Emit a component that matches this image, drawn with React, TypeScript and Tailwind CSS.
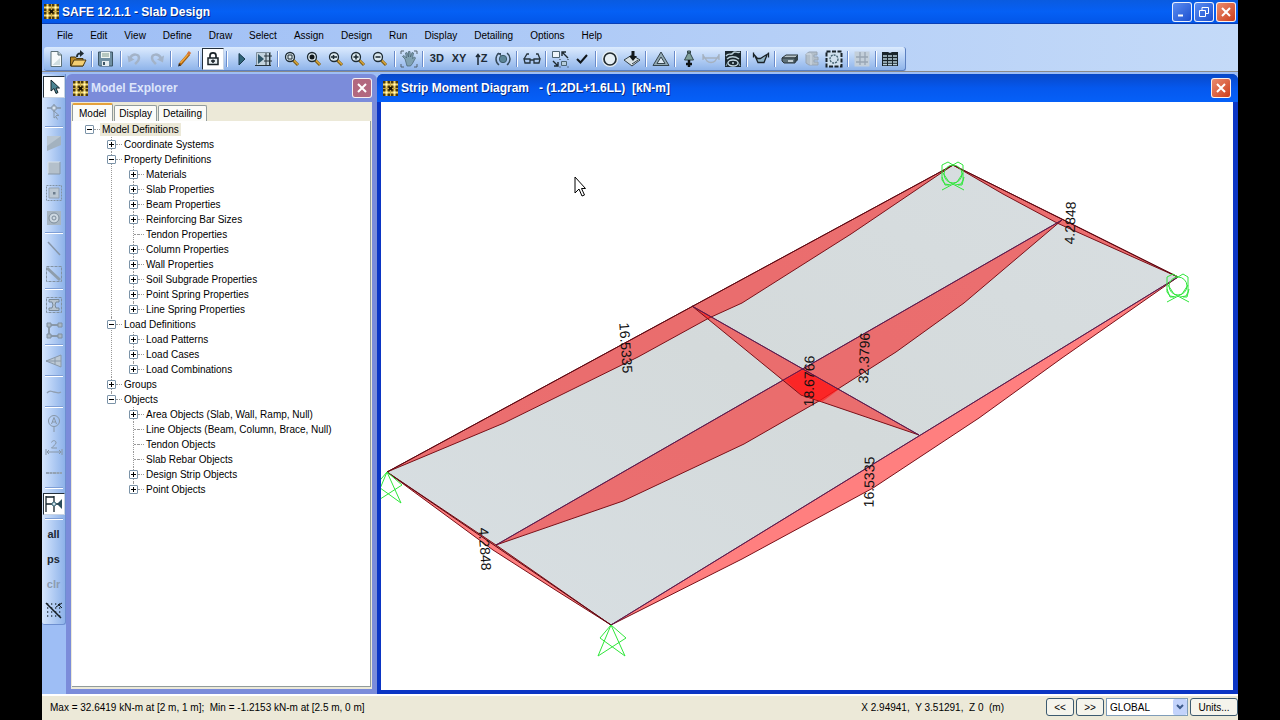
import { Fragment, useState } from "react";
import type { ReactNode } from "react";

const MENUS = [
  "File",
  "Edit",
  "View",
  "Define",
  "Draw",
  "Select",
  "Assign",
  "Design",
  "Run",
  "Display",
  "Detailing",
  "Options",
  "Help",
];

type TreeNode = {
  label: string;
  open?: boolean;
  closed?: boolean;
  children?: TreeNode[];
};

const TREE: TreeNode = {
  label: "Model Definitions",
  open: true,
  children: [
    { label: "Coordinate Systems", closed: true },
    {
      label: "Property Definitions",
      open: true,
      children: [
        { label: "Materials", closed: true },
        { label: "Slab Properties", closed: true },
        { label: "Beam Properties", closed: true },
        { label: "Reinforcing Bar Sizes", closed: true },
        { label: "Tendon Properties" },
        { label: "Column Properties", closed: true },
        { label: "Wall Properties", closed: true },
        { label: "Soil Subgrade Properties", closed: true },
        { label: "Point Spring Properties", closed: true },
        { label: "Line Spring Properties", closed: true },
      ],
    },
    {
      label: "Load Definitions",
      open: true,
      children: [
        { label: "Load Patterns", closed: true },
        { label: "Load Cases", closed: true },
        { label: "Load Combinations", closed: true },
      ],
    },
    { label: "Groups", closed: true },
    {
      label: "Objects",
      open: true,
      children: [
        { label: "Area Objects (Slab, Wall, Ramp, Null)", closed: true },
        { label: "Line Objects (Beam, Column, Brace, Null)" },
        { label: "Tendon Objects" },
        { label: "Slab Rebar Objects" },
        { label: "Design Strip Objects", closed: true },
        { label: "Point Objects", closed: true },
      ],
    },
  ],
};

function Icon({ children }: { children: ReactNode }) {
  return (
    <svg viewBox="0 0 18 18" className="w-[18px] h-[18px] shrink-0" fill="none">
      {children}
    </svg>
  );
}

function Lens({ children, dark }: { children?: ReactNode; dark?: boolean }) {
  return (
    <Icon>
      <path d="M10 10l5 5" stroke="#7a5a14" strokeWidth="3" />
      <path d="M10.500 10l4.500 4.500" stroke="#d9a53a" strokeWidth="1.500" />
      <circle cx="7" cy="7" r="4.500" fill="#dbe8ee" stroke="#1c2a33" strokeWidth="1.300" />
      {dark && <circle cx="7" cy="7" r="2.500" fill="#10181c" />}
      {children}
    </Icon>
  );
}

type Tool = { name: string; icon: ReactNode; active?: boolean };

const TOOL_GROUPS: Tool[][] = [
  [
    {
      name: "New",
      icon: (
        <Icon>
          <path d="M4 1.500h7l3.500 3.500v11.500H4z" fill="#f6fafb" stroke="#5b7079" />
          <path d="M11 1.500V5h3.500" fill="#b9c9cf" stroke="#5b7079" />
          <path d="M5.500 15l7.500-7v7z" fill="#cfdde0" />
        </Icon>
      ),
    },
    {
      name: "Open",
      icon: (
        <Icon>
          <path d="M1.500 16V7h5l1 1.500H14V16z" fill="#b98a2a" stroke="#4a380f" />
          <path d="M2 16l3-6h12l-3 6z" fill="#f5cf72" stroke="#4a380f" />
          <path d="M8 7c0-3 1-3.500 3.500-3.500" stroke="#1f2c33" strokeWidth="2" />
          <path d="M11 0l4 3.500L11 7z" fill="#1f2c33" />
        </Icon>
      ),
    },
  ],
  [
    {
      name: "Save",
      icon: (
        <Icon>
          <path d="M1.500 2h14v14h-13l-1-1z" fill="#6f8fa2" stroke="#3d5565" />
          <path d="M4 2h9v6H4z" fill="#eef5f2" />
          <path d="M5 4h7M5 6h7" stroke="#7f9a8d" />
          <path d="M5 11h7v5H5z" fill="#e4ecef" />
          <path d="M6 12h2v3H6z" fill="#3d5565" />
        </Icon>
      ),
    },
  ],
  [
    {
      name: "Undo",
      icon: (
        <Icon>
          <path d="M4 8c3-5 9-4 9 0 0 3-2 4-4 6" stroke="#a3b3c8" strokeWidth="2.500" />
          <path d="M1.500 5.500l1 7 6-3z" fill="#a3b3c8" />
        </Icon>
      ),
    },
    {
      name: "Redo",
      icon: (
        <Icon>
          <path d="M13 8C10 3 4 4 4 8c0 3 2 4 4 6" stroke="#a3b3c8" strokeWidth="2.500" />
          <path d="M16 5.500l-1 7-6-3z" fill="#a3b3c8" />
        </Icon>
      ),
    },
  ],
  [
    {
      name: "Edit pencil",
      icon: (
        <Icon>
          <path d="M3.500 15L13 4" stroke="#a35f0e" strokeWidth="3" />
          <path d="M4.500 13L13 3.500" stroke="#f3a63a" strokeWidth="1.500" />
          <path d="M12 4.500l2-2.500" stroke="#d6793a" strokeWidth="3" />
          <path d="M2 16.500l1-3 2 2z" fill="#222" />
        </Icon>
      ),
    },
  ],
  [
    {
      name: "Lock model",
      active: true,
      icon: (
        <Icon>
          <path d="M6 8V5.500C6 2 12 2 12 5.500V8" stroke="#1b2328" strokeWidth="1.700" />
          <path d="M4 8h10v6.500H4z" fill="#e6ecef" stroke="#1b2328" strokeWidth="1.500" />
          <path d="M9 9.500v3.500M7 11h4" stroke="#1b2328" strokeWidth="1.500" />
        </Icon>
      ),
    },
  ],
  [
    {
      name: "Run analysis",
      icon: (
        <Icon>
          <path d="M6 3.500l6 5.500-6 6z" fill="#2f6478" stroke="#17394a" />
        </Icon>
      ),
    },
    {
      name: "Run design",
      icon: (
        <Icon>
          <path d="M1.500 2.500h14v13h-14z" fill="#c3d3de" stroke="#7d8f9c" />
          <path d="M9 6h8M9 11h8M11 3v12M14.500 3v12" stroke="#2a373f" />
          <path d="M3 4l6 5-6 5z" fill="#2f5668" />
          <path d="M0 15.500h16" stroke="#26333b" />
        </Icon>
      ),
    },
  ],
  [
    {
      name: "Rubber band zoom",
      icon: (
        <Lens>
          <path d="M5 5h4v4H5z" stroke="#1c2a33" />
        </Lens>
      ),
    },
    { name: "Full view", icon: <Lens dark /> },
    {
      name: "Previous zoom",
      icon: (
        <Lens>
          <path d="M4 7h6M6.500 5v4" stroke="#1c2a33" strokeWidth="1.500" />
        </Lens>
      ),
    },
    {
      name: "Zoom in",
      icon: (
        <Lens>
          <path d="M4.500 7h5M7 4.500v5" stroke="#1c2a33" strokeWidth="1.500" />
        </Lens>
      ),
    },
    {
      name: "Zoom out",
      icon: (
        <Lens>
          <path d="M4.500 7h5" stroke="#1c2a33" strokeWidth="1.500" />
        </Lens>
      ),
    },
  ],
  [
    {
      name: "Pan",
      icon: (
        <Icon>
          <path
            d="M5 9L2.500 6.500 4 5.500 6.500 8 5.500 3 7 2.500 8.500 7V1.500H10L10.500 7l1.500-4.500 1.500.5-1 5.500 2-1.500 1 1-3 5.500-2 2.500H7z"
            fill="#7fa0b0"
            stroke="#47616f"
            strokeWidth=".7"
          />
          <path d="M1 4V1h3M14 1h3v3M1 14v3h3M17 14v3h-3" stroke="#55636e" />
        </Icon>
      ),
    },
  ],
  [
    { name: "3D view", icon: <span className="text-[11px] font-bold">3D</span> },
    { name: "XY view", icon: <span className="text-[11px] font-bold">XY</span> },
    {
      name: "Elevation view",
      icon: (
        <span className="flex items-center text-[11px] font-bold">
          <svg viewBox="0 0 6 12" className="w-[6px] h-[12px]" fill="none">
            <path d="M3 12V2M1 4l2-2.500L5 4" stroke="#1d2a35" strokeWidth="1.500" />
          </svg>
          Z
        </span>
      ),
    },
    {
      name: "Rotate view",
      icon: (
        <Icon>
          <circle cx="9" cy="9" r="3.700" fill="#5c8698" stroke="#3a5a69" />
          <path d="M5 3C1 6 1 12 5 15M13 3c4 3 4 9 0 12" stroke="#35495a" strokeWidth="1.500" />
          <path d="M3 3h4v3z" fill="#35495a" />
        </Icon>
      ),
    },
  ],
  [
    {
      name: "Perspective",
      icon: (
        <Icon>
          <path d="M1 9h6v4H2zM11 9h6l-1 4h-5zM7 10h4M1 9l3-5h2M17 9l-2-5h-2" stroke="#26343c" strokeWidth="1.300" />
        </Icon>
      ),
    },
  ],
  [
    {
      name: "Object shrink",
      icon: (
        <Icon>
          <path d="M1.500 1.500h7v6h-7z" fill="#eef5fa" stroke="#4d6472" />
          <path d="M17 8l-6-6M11 6V2h4M2 11l5 5M3 16h4v-4" stroke="#1e2a31" strokeWidth="1.400" />
          <path d="M10.500 11.500h5v4h-5z" fill="#b5cddd" stroke="#4d6472" />
          <path d="M8.500 9.500h1M16.500 9.500h1M8.500 17h1M16.500 17h1" stroke="#1e2a31" />
        </Icon>
      ),
    },
    {
      name: "Set display options",
      icon: (
        <Icon>
          <path d="M4 9l3.500 3.500L14 5" stroke="#10161a" strokeWidth="2" />
        </Icon>
      ),
    },
  ],
  [
    {
      name: "Show undeformed shape",
      icon: (
        <Icon>
          <circle cx="9" cy="9" r="8" fill="#e6eff4" />
          <circle cx="9" cy="9" r="6" stroke="#222c32" strokeWidth="1.700" />
        </Icon>
      ),
    },
    {
      name: "Show loads",
      icon: (
        <Icon>
          <path d="M1 10l8-5 8 5-8 6z" fill="#d8e2e6" stroke="#323f46" />
          <path d="M9 14l6-4" stroke="#323f46" />
          <path d="M8.500 1h3v5H14l-4 5-4-5h2.500z" fill="#12191d" />
        </Icon>
      ),
    },
  ],
  [
    {
      name: "Show deformed shape",
      icon: (
        <Icon>
          <path d="M9 2l8 13.500H1z" fill="#91a8b3" stroke="#35444c" />
          <path d="M9 7l4 6.500H5z" fill="#dbe8f3" stroke="#35444c" />
        </Icon>
      ),
    },
  ],
  [
    {
      name: "Show reactions",
      icon: (
        <Icon>
          <path d="M7.500 1h3v2h-3zM8 3h2l3.500 7h-9z" fill="#7fa09a" stroke="#33474a" />
          <path d="M9 10v7M6 14h6" stroke="#0d1214" strokeWidth="2.500" />
        </Icon>
      ),
    },
    {
      name: "Show beam forces",
      icon: (
        <Icon>
          <path d="M1 4v6M17 4v6M1 5l4 6c2 2 6 2 8 0l4-6M1 8h16" stroke="#a5b1bf" strokeWidth="1.300" />
        </Icon>
      ),
    },
    {
      name: "Show slab forces",
      icon: (
        <Icon>
          <path d="M1 1h16v16H1z" fill="#1b272e" />
          <path d="M2 6c3-4 5 0 7-3s4 1 7-1M3 9c3-3 8-3 12 0" stroke="#b9ced8" strokeWidth="1.400" />
          <ellipse cx="9" cy="13" rx="5" ry="3" stroke="#c8dbe4" strokeWidth="1.300" />
          <path d="M2 16l2-4M16 16l-2-4" stroke="#8faab7" />
          <circle cx="9" cy="13" r="1" fill="#c8dbe4" />
        </Icon>
      ),
    },
  ],
  [
    {
      name: "Show strip forces",
      icon: (
        <Icon>
          <path d="M4 8l5 1.500L15 5l-3 7.500H6z" fill="#8fb3c4" />
          <path d="M1.500 2.500v5M16.500 2.500v5M1.500 4l4 4.500h3l8-5M3 6l3 6.500h6l3-7.500" stroke="#1a2328" strokeWidth="1.300" />
        </Icon>
      ),
    },
  ],
  [
    {
      name: "Show slab design",
      icon: (
        <Icon>
          <path d="M1 8l4-3h12l-3 3z" fill="#b7c4c9" stroke="#29343a" />
          <path d="M1 8h13v5H3l-2-2z" fill="#5e7078" stroke="#29343a" />
          <path d="M14 8l3-3v5l-3 3z" fill="#33424a" />
          <path d="M7 11h5" stroke="#e6eef2" strokeWidth="1.500" />
        </Icon>
      ),
    },
    {
      name: "Show beam design",
      icon: (
        <Icon>
          <path d="M3 4l3-2h8v3h-3v2h4v3h-4v2h4v3H6l-3-2z" fill="#b3bfca" stroke="#98a5b3" />
          <path d="M3 4h5v11" stroke="#d4dee8" />
        </Icon>
      ),
    },
    {
      name: "Show punching shear",
      icon: (
        <Icon>
          <path d="M1.500 1.500h15v15h-15z" fill="#cfe0ee" stroke="#18232a" strokeWidth="2" strokeDasharray="4 1.500" />
          <circle cx="9" cy="9" r="4" stroke="#42606f" strokeWidth="1.300" strokeDasharray="2 1" />
        </Icon>
      ),
    },
  ],
  [
    {
      name: "Show detailing",
      icon: (
        <Icon>
          <path d="M1.500 1.500h15v15h-15z" fill="#c3cfda" />
          <path d="M3 7h12M3 12h12M7 2v13M12 2v13" stroke="#99a6b4" strokeWidth="1.300" />
        </Icon>
      ),
    },
  ],
  [
    {
      name: "Show tables",
      icon: (
        <Icon>
          <path d="M1 2h6l2 1 2-1h6v14H1z" fill="#18242b" />
          <path d="M2 6h4M7 6h4M12 6h4M2 9h4M7 9h4M12 9h4M2 12h4M7 12h4M12 12h4M2 14.500h4M7 14.500h4M12 14.500h4" stroke="#b8cfdb" strokeWidth="1.500" />
        </Icon>
      ),
    },
  ],
];

const SIDE_GROUPS: Tool[][] = [
  [
    {
      name: "Select",
      active: true,
      icon: (
        <Icon>
          <path d="M6 2v11l3-2.500 2 5 2-1-2-4.500h3.500z" fill="#4a8492" stroke="#16262c" />
        </Icon>
      ),
    },
    {
      name: "Reshape",
      icon: (
        <Icon>
          <path d="M2 5h14M9 1v8" stroke="#8797a8" strokeWidth="1.300" />
          <path d="M7 3h4v4H7z" fill="#d7e4f2" stroke="#8797a8" />
          <path d="M9 8v7l2-1.500 1.500 3M9 8l5 4.500h-3" stroke="#8797a8" />
        </Icon>
      ),
    },
  ],
  [
    {
      name: "Draw slab",
      icon: (
        <Icon>
          <path d="M2 2h14v9L2 17z" fill="#a3b2bf" />
          <path d="M2 2h14L2 12z" fill="#bac7d3" />
        </Icon>
      ),
    },
    {
      name: "Draw rectangular slab",
      icon: (
        <Icon>
          <path d="M3 3h12v12H3z" fill="#b4c0cb" />
          <path d="M3 15V3h12" stroke="#d8e1e9" />
          <path d="M15 3v12H3" stroke="#8897a6" />
        </Icon>
      ),
    },
    {
      name: "Quick draw slab",
      icon: (
        <Icon>
          <path d="M1.500 1.500h15v15h-15z" stroke="#8292a2" strokeDasharray="2 1" />
          <path d="M4 4h10v10H4z" fill="#bcc8d3" stroke="#93a1b0" />
          <path d="M8 8h2.500v2.500H8z" fill="#6d7d8d" />
        </Icon>
      ),
    },
    {
      name: "Quick draw around points",
      icon: (
        <Icon>
          <path d="M2 2h14v14H2z" fill="#a7b5c2" />
          <circle cx="9" cy="9" r="5" fill="#cdd8e1" stroke="#7d8d9c" />
          <circle cx="9" cy="9" r="2" stroke="#7d8d9c" />
        </Icon>
      ),
    },
  ],
  [
    {
      name: "Draw beam",
      icon: (
        <Icon>
          <path d="M3 2l12 13" stroke="#8796a8" strokeWidth="1.500" />
        </Icon>
      ),
    },
    {
      name: "Quick draw beam",
      icon: (
        <Icon>
          <path d="M1.500 1.500h15v15h-15z" stroke="#8292a2" strokeDasharray="3 1" />
          <path d="M2 3l13 12" stroke="#8e9dac" strokeWidth="3" />
        </Icon>
      ),
    },
  ],
  [
    {
      name: "Draw column",
      icon: (
        <Icon>
          <path d="M1.500 1.500h15v15h-15z" stroke="#8292a2" strokeDasharray="3 1" />
          <path d="M4 3.500h10V6h-3l-1 3 1 3h3v2.500H4V12h3l1-3-1-3H4z" fill="#b7c4d0" stroke="#798998" />
        </Icon>
      ),
    },
    {
      name: "Draw wall",
      icon: (
        <Icon>
          <path d="M15 4H4v11h11" stroke="#8998a8" strokeWidth="2" />
          <path d="M2 2h4v4H2zM2 13h4v4H2zM13 2h4v4h-4zM13 13h4v4h-4z" fill="#a9b7c5" stroke="#8090a0" />
        </Icon>
      ),
    },
  ],
  [
    {
      name: "Draw ramp",
      icon: (
        <Icon>
          <path d="M1 9l15-6v12z" fill="#bdc9d4" stroke="#8998a8" />
          <path d="M1 9h15M10 5.500v7" stroke="#8998a8" />
        </Icon>
      ),
    },
  ],
  [
    {
      name: "Draw tendon",
      icon: (
        <Icon>
          <path d="M2 10c3-4 5-1 7-1s4 2 7 0" stroke="#8f9eb0" strokeWidth="1.300" />
        </Icon>
      ),
    },
  ],
  [
    {
      name: "Draw strip",
      icon: (
        <Icon>
          <circle cx="9" cy="7" r="5.500" stroke="#8796a6" />
          <path d="M6.500 10L9 3.500l2.500 6.500M7.500 8h3M9 13v5" stroke="#8796a6" />
        </Icon>
      ),
    },
    {
      name: "Draw dimension",
      icon: (
        <Icon>
          <path d="M1 10v6M17 10v6M2 13h14M4 11l-2 2 2 2M14 11l2 2-2 2" stroke="#8796a6" />
          <path d="M6.500 3.500c1-3 5-2 4.500.5-.5 2-3 3-4.500 5H12" stroke="#8796a6" />
        </Icon>
      ),
    },
    {
      name: "Draw rebar",
      icon: (
        <Icon>
          <path d="M1 9h16" stroke="#93a2b3" strokeWidth="2" strokeDasharray="3 .5" />
        </Icon>
      ),
    },
  ],
  [
    {
      name: "Snap to points",
      active: true,
      icon: (
        <Icon>
          <path d="M1 1v16M1 9h13M9 1v16M1 2h8" stroke="#15232b" strokeWidth="1.300" />
          <circle cx="9" cy="9" r="2" fill="#cfe1e8" stroke="#3a6a7c" />
          <path d="M17 4v10l-5-5z" fill="#2b4d5b" />
        </Icon>
      ),
    },
  ],
  [
    { name: "Select all", icon: <span className="text-[11px] font-bold">all</span> },
    { name: "Previous selection", icon: <span className="text-[11px] font-bold">ps</span> },
    {
      name: "Clear selection",
      icon: <span className="text-[11px] font-bold text-[#8c9cb0]">clr</span>,
    },
    {
      name: "Intersecting line select",
      icon: (
        <Icon>
          <path d="M2 3h15M2 7h15M2 11h15M2 15h15" stroke="#2e3d49" strokeWidth="1.300" strokeDasharray="1.300 2.700" />
          <path d="M1 2l15 15" stroke="#141d23" strokeWidth="1.500" />
          <path d="M17 2l-6 4M13 3l4 4" stroke="#141d23" />
        </Icon>
      ),
    },
  ],
];

function AppIcon() {
  return (
    <svg viewBox="0 0 15 15" className="w-[15px] h-[15px] shrink-0">
      <path d="M0 0h15v15H0z" fill="#4a380c" />
      <path d="M0 3.500h15M0 11.500h15M3.500 0v15M11.500 0v15" stroke="#f0d468" strokeWidth="2" />
      <path d="M7.500 0v15M0 7.500h15" stroke="#c9a845" />
      <path d="M2.500 2.500h2v2h-2zM10.500 2.500h2v2h-2zM2.500 10.500h2v2h-2zM10.500 10.500h2v2h-2z" fill="#fff6c8" />
      <path d="M6 6h3v3H6z" fill="#1a1405" />
    </svg>
  );
}

function WindowButton({ name, children, className }: { name: string; children: ReactNode; className: string }) {
  return (
    <button
      aria-label={name}
      className={`flex items-center justify-center w-[20px] h-[20px] rounded-[3px] border border-white/90 ${className}`}
    >
      <svg viewBox="0 0 14 14" className="w-[14px] h-[14px]" fill="none" stroke="white">
        {children}
      </svg>
    </button>
  );
}

function CloseButton({ muted }: { muted?: boolean }) {
  return (
    <WindowButton
      name="Close"
      className={muted ? "bg-[#b2687f]" : "bg-linear-to-br from-[#e98b6e] to-[#cc3a14]"}
    >
      <path d="M3 3l8 8M11 3l-8 8" strokeWidth="2" />
    </WindowButton>
  );
}

function ToolButton({ tool }: { tool: Tool }) {
  return (
    <button
      aria-label={tool.name}
      className={`flex items-center justify-center w-[22px] h-[22px] shrink-0 ${
        tool.active ? "bg-white border border-[#24303c] border-r-[#c8d4e4] border-b-[#c8d4e4]" : ""
      }`}
    >
      {tool.icon}
    </button>
  );
}

function TreeItem({ node, depth = 0, last = true }: { node: TreeNode; depth?: number; last?: boolean }) {
  const hasBox = node.open || node.closed;

  return (
    <li className="relative">
      {depth > 0 && (
        <span
          className={`absolute left-[4px] top-0 border-l border-dotted border-[#9a9a9a] ${last ? "h-[8px]" : "bottom-0"}`}
        />
      )}
      <div className="relative flex items-center h-[15px]">
        {hasBox ? (
          <button
            aria-label={`Toggle ${node.label}`}
            className="w-[9px] h-[9px] shrink-0 border border-[#7b93a8] rounded-[1px] bg-white flex items-center justify-center"
          >
            <svg viewBox="0 0 7 7" className="w-[7px] h-[7px] shrink-0" stroke="#000">
              <path d={node.open ? "M1 3.500h5" : "M1 3.500h5M3.500 1v5"} />
            </svg>
          </button>
        ) : (
          <span className="w-[4px] ml-[5px] border-t border-dotted border-[#9a9a9a]" />
        )}
        <span className="w-[6px] border-t border-dotted border-[#9a9a9a]" />
        <span className={`px-[2px] whitespace-nowrap leading-[13px] ${depth === 0 ? "bg-[#ece9d8]" : ""}`}>
          {node.label}
        </span>
      </div>
      {node.children && (
        <ul className="pl-[22px]">
          {node.children.map((child, i) => (
            <TreeItem
              key={child.label}
              node={child}
              depth={depth + 1}
              last={i === node.children!.length - 1}
            />
          ))}
        </ul>
      )}
    </li>
  );
}

function ModelExplorer() {
  const [tab, setTab] = useState("Model");

  return (
    <section className="flex flex-col w-[311px] shrink-0 rounded-t-[6px] bg-[#7b8cda] px-[5px] pb-[5px]">
      <header className="flex items-center justify-between h-[28px] pl-[2px]">
        <div className="flex items-center gap-[3px]">
          <AppIcon />
          <h2 className="text-[12px] font-bold text-[#dde5fb]">Model Explorer</h2>
        </div>
        <CloseButton muted />
      </header>
      <div className="flex flex-col flex-1 min-h-0 bg-[#ece9d8] pt-[1px] pb-[2px] px-[1px]">
        <div className="flex items-end h-[18px]">
          {["Model", "Display", "Detailing"].map((name) => (
            <button
              key={name}
              onClick={() => setTab(name)}
              className={`border border-b-0 border-[#919b9c] rounded-t-[2px] whitespace-nowrap bg-[#fbfbf8] mr-[1px] ${
                tab === name
                  ? "h-[18px] px-[6px] border-t-2 border-t-[#e5a13a]"
                  : "h-[16px] px-[4px]"
              }`}
            >
              {name}
            </button>
          ))}
        </div>
        <div className="flex-1 min-h-0 overflow-hidden bg-white border-r border-b border-[#919b9c] pl-[13px] pt-[1px]">
          <ul>
            <TreeItem node={TREE} />
          </ul>
        </div>
      </div>
    </section>
  );
}

const STRIPS = [
  "387,472 953,165 851,234 742,303 709,318 638,357 504,423",
  "953,165 1062,219 1178,277 1133,257 1057,223 1003,194",
  "387,472 496,545 611,625 557,591 493,550 440,511",
  "611,625 1178,277 1062,358 979,418 873,488 742,559",
  "496,545 1062,220 964,303 896,352 819,401 744,444 623,501",
  "692,306 919,435 822,402 801,395",
];

const LABELS = [
  { text: "16.5335", x: 626, y: 348, angle: 86 },
  { text: "4.2848", x: 485, y: 549, angle: 86 },
  { text: "4.2848", x: 1070, y: 223, angle: -88 },
  { text: "18.6766", x: 809, y: 381, angle: -89 },
  { text: "32.3796", x: 864, y: 358, angle: -88 },
  { text: "16.5335", x: 869, y: 482, angle: -89 },
];

function PinSupport({ x, y }: { x: number; y: number }) {
  return (
    <g transform={`translate(${x} ${y})`}>
      <path d="M0 0L-13 31L15 13L0 0L-11 13L14 31Z" />
    </g>
  );
}

function RollerSupport({ x, y }: { x: number; y: number }) {
  return (
    <g transform={`translate(${x} ${y})`}>
      <path d="M0 0L-5-3L-11 0V15L-8 19L-2 20M0 0L5-3L10 0V15L8 19L2 20" />
      <path d="M-11 25L4 17L10 8M11 25L-4 17L-10 8" />
      <ellipse cx="0" cy="9" rx="9" ry="9" />
      <path d="M-11 12L-8 20H-4M11 12L9 20H5" />
    </g>
  );
}

function MomentDiagram() {
  return (
    <svg
      viewBox="381 102 852 588"
      preserveAspectRatio="xMinYMin meet"
      className="block w-full h-full font-['Liberation_Sans',sans-serif]"
      role="img"
      aria-label="Strip moment diagram"
    >
      <defs>
        <linearGradient id="slab" x1="0" y1="1" x2="1" y2="0">
          <stop offset="0" stopColor="#d8dfe3" />
          <stop offset=".5" stopColor="#d4dadb" />
          <stop offset="1" stopColor="#d8dee1" />
        </linearGradient>
      </defs>
      <polygon points="387,472 953,165 1178,277 611,625" fill="url(#slab)" />
      {STRIPS.map((points) => (
        <polygon key={points} points={points} fill="#ff0000" fillOpacity=".5" stroke="#7a1018" strokeWidth="1" />
      ))}
      <polygon points="801,395 786,380 803,370 838,390 822,402" fill="#ff1c1c" fillOpacity=".6" />
      <path d="M611 625L1178 277M496 545L1062 220M692 306L919 435" stroke="#4a2068" strokeWidth=".8" />
      <path d="M387 472L953 165L1178 277M387 472L611 625" fill="none" stroke="#5a0a14" />
      <g fill="none" stroke="#2fe63a" strokeWidth="1">
        <PinSupport x={611} y={625} />
        <PinSupport x={387} y={472} />
        <RollerSupport x={953} y={165} />
        <RollerSupport x={1178} y={277} />
      </g>
      {LABELS.map((label) => (
        <text
          key={`${label.x}-${label.y}`}
          transform={`translate(${label.x} ${label.y}) rotate(${label.angle})`}
          textAnchor="middle"
          dominantBaseline="central"
          fontSize="14"
          fill="#111"
        >
          {label.text}
        </text>
      ))}
      {/* mouse pointer */}
      <path d="M575 177v16l4-4 3 7 2.500-1-3-6.500h4z" fill="#fff" stroke="#000" />
    </svg>
  );
}

export default function App() {
  return (
    <div className="min-h-screen bg-black px-[42px]">
      <div className="flex flex-col h-screen overflow-hidden text-[10px] text-black font-['Liberation_Sans',Arial,sans-serif]">
        <header className="flex items-center justify-between h-[24px] shrink-0 pl-[2px] pr-[2px] bg-linear-to-b from-[#0a5be0] via-[#0560f5] to-[#0356e8] border-b border-[#0a3fb5]">
          <div className="flex items-center gap-[3px]">
            <AppIcon />
            <h1 className="text-[12px] font-bold text-white [text-shadow:1px_1px_0_#0a2a80]">
              SAFE 12.1.1 - Slab Design
            </h1>
          </div>
          <div className="flex gap-[2px]">
            <WindowButton name="Minimize" className="bg-linear-to-br from-[#5b8cf0] to-[#1c4fd0]">
              <path d="M3 10.500h5" strokeWidth="2" />
            </WindowButton>
            <WindowButton name="Restore" className="bg-linear-to-br from-[#5b8cf0] to-[#1c4fd0]">
              <path d="M2.500 5.500h6v6h-6zM5 5V2.500h6.500v6H9" />
            </WindowButton>
            <CloseButton />
          </div>
        </header>

        <div className="shrink-0 bg-linear-to-r from-[#9ebef5] to-[#c4daf8] border-b border-[#8a8a8a]">
          <nav className="flex items-center gap-[17px] h-[23px] pl-[15px]">
            {MENUS.map((menu) => (
              <button key={menu}>{menu}</button>
            ))}
          </nav>
          <div className="flex items-center justify-between w-[862px] h-[24px] ml-[2px] pl-[1px] pr-[3px] rounded-[3px] bg-linear-to-b from-[#dcebfe] to-[#8fb4ea] border-b border-r border-[#5b7fc0] text-[#1d2a35]">
            {TOOL_GROUPS.map((group, i) => (
              <Fragment key={i}>
                {i > 0 && (
                  <span className="flex justify-center w-[6px]">
                    <span className="w-[2px] h-[16px] bg-[#6a8ccb] border-r border-white" />
                  </span>
                )}
                {group.map((tool) => (
                  <ToolButton key={tool.name} tool={tool} />
                ))}
              </Fragment>
            ))}
          </div>
        </div>

        <main className="flex flex-1 min-h-0 pt-[2px] bg-[#9ebef5]">
          <aside className="w-[24px] shrink-0">
            <div className="flex flex-col items-center w-[24px] pb-[2px] rounded-b-[3px] bg-linear-to-r from-[#d6e6fd] to-[#8db2e9] border-r border-b border-[#6d8fd0] text-[#1d2a35]">
              {SIDE_GROUPS.map((group, i) => (
                <Fragment key={i}>
                  {i > 0 && (
                    <span className="flex items-center h-[6px]">
                      <span className="w-[18px] h-[2px] bg-white border-t border-[#7f9fd6]" />
                    </span>
                  )}
                  {group.map((tool) => (
                    <span key={tool.name} className="flex items-center h-[25px]">
                      <ToolButton tool={tool} />
                    </span>
                  ))}
                </Fragment>
              ))}
            </div>
          </aside>

          <ModelExplorer />

          <section className="flex flex-col flex-1 min-w-0 rounded-t-[6px] bg-[#0b35c4] pl-[4px] pr-[5px] pb-[4px]">
            <header className="-ml-[4px] -mr-[5px] flex items-center justify-between h-[28px] shrink-0 pl-[6px] pr-[7px] rounded-t-[6px] bg-linear-to-b from-[#0848c8] via-[#0558ee] to-[#0560f8]">
              <div className="flex items-center gap-[3px]">
                <AppIcon />
                <h2 className="text-[12px] font-bold text-white whitespace-pre [text-shadow:1px_1px_0_#0a2a80]">
                  {"Strip Moment Diagram   - (1.2DL+1.6LL)  [kN-m]"}
                </h2>
              </div>
              <CloseButton />
            </header>
            <div className="flex-1 min-h-0 bg-white">
              <MomentDiagram />
            </div>
          </section>
        </main>

        <footer className="flex items-center justify-between h-[26px] shrink-0 pl-[8px] pb-[2px] bg-[#ece9d8] border-t-2 border-white">
          <p className="whitespace-pre">
            {"Max = 32.6419 kN-m at [2 m, 1 m];  Min = -1.2153 kN-m at [2.5 m, 0 m]"}
          </p>
          <div className="flex items-center gap-[2px]">
            <p className="mr-[40px]">X 2.94941, &nbsp;Y 3.51291, &nbsp;Z 0 &nbsp;(m)</p>
            <button className="w-[28px] h-[18px] rounded-[3px] border border-[#3c5a70] bg-[#f5f4ec]">&lt;&lt;</button>
            <button className="w-[28px] h-[18px] rounded-[3px] border border-[#3c5a70] bg-[#f5f4ec]">&gt;&gt;</button>
            <div className="relative">
              <select
                aria-label="Coordinate system"
                className="block appearance-none w-[82px] h-[18px] pl-[3px] border border-[#7f9db9] bg-white"
              >
                <option>GLOBAL</option>
              </select>
              <span className="absolute right-[1px] top-[1px] flex items-center justify-center w-[14px] h-[16px] rounded-[2px] bg-[#c3d3fb] pointer-events-none">
                <svg viewBox="0 0 8 6" className="w-[8px] h-[6px]" fill="none">
                  <path d="M1 1l3 3 3-3" stroke="#3d5a8a" strokeWidth="2" />
                </svg>
              </span>
            </div>
            <button className="w-[48px] h-[18px] rounded-[3px] border border-[#3c5a70] bg-[#f5f4ec]">Units...</button>
          </div>
        </footer>
      </div>
    </div>
  );
}
